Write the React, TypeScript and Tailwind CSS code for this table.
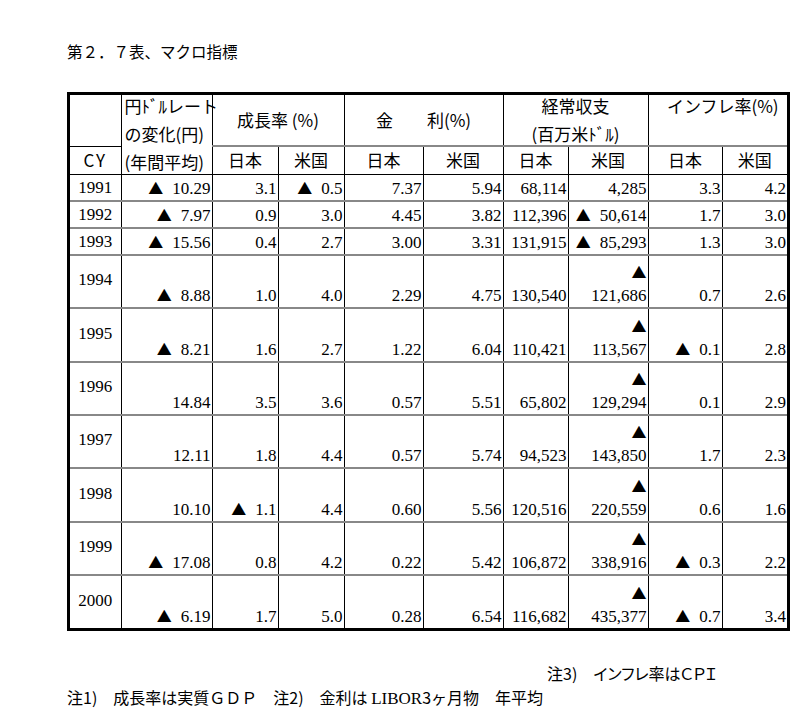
import React from "react";

const cjk = "font-['Noto_Sans_CJK_JP',sans-serif]";
const serif = "font-['Liberation_Serif','Noto_Sans_CJK_JP',serif]";
const tri = "font-['Noto_Sans_CJK_JP',sans-serif] text-[15px]";

// "-" prefix = 減少 (▲)
const rows: string[][] = [
  ["1991", "-10.29", "3.1", "-0.5", "7.37", "5.94", "68,114", "4,285", "3.3", "4.2"],
  ["1992", "-7.97", "0.9", "3.0", "4.45", "3.82", "112,396", "-50,614", "1.7", "3.0"],
  ["1993", "-15.56", "0.4", "2.7", "3.00", "3.31", "131,915", "-85,293", "1.3", "3.0"],
  ["1994", "-8.88", "1.0", "4.0", "2.29", "4.75", "130,540", "-121,686", "0.7", "2.6"],
  ["1995", "-8.21", "1.6", "2.7", "1.22", "6.04", "110,421", "-113,567", "-0.1", "2.8"],
  ["1996", "14.84", "3.5", "3.6", "0.57", "5.51", "65,802", "-129,294", "0.1", "2.9"],
  ["1997", "12.11", "1.8", "4.4", "0.57", "5.74", "94,523", "-143,850", "1.7", "2.3"],
  ["1998", "10.10", "-1.1", "4.4", "0.60", "5.56", "120,516", "-220,559", "0.6", "1.6"],
  ["1999", "-17.08", "0.8", "4.2", "0.22", "5.42", "106,872", "-338,916", "-0.3", "2.2"],
  ["2000", "-6.19", "1.7", "5.0", "0.28", "6.54", "116,682", "-435,377", "-0.7", "3.4"],
];

const heights = ["h-[27px]", "h-[27px]", "h-[27px]", "h-[53px]", "h-[54px]", "h-[53px]", "h-[53px]", "h-[54px]", "h-[53px]", "h-[53px]"];

function Num({ v, stack }: { v: string; stack?: boolean }) {
  const neg = v.startsWith("-");
  const n = neg ? v.slice(1) : v;
  if (neg && stack) {
    return (
      <div className="flex flex-col items-end">
        <span className={`${tri} leading-[25px]`}>▲</span>
        <span className="leading-[23px]">{n}</span>
      </div>
    );
  }
  return (
    <div className="flex items-baseline justify-end leading-[23px]">
      {neg && <span className={`${tri} mr-[9px]`}>▲</span>}
      <span>{n}</span>
    </div>
  );
}

export default function App() {
  return (
    <div className="min-h-screen bg-white pl-[67px] pt-[40px] text-black">
      <p className={`${cjk} text-[15.5px] leading-[22px]`}>第２．７表、マクロ指標</p>

      <div className="mt-[30px] w-[723px] border-[3px] border-black">
        <table className="w-[717px] table-fixed border-collapse">
          <colgroup>
            <col className="w-[51px]" />
            <col className="w-[91px]" />
            <col className="w-[66px]" />
            <col className="w-[66px]" />
            <col className="w-[79px]" />
            <col className="w-[80px]" />
            <col className="w-[65px]" />
            <col className="w-[80px]" />
            <col className="w-[74px]" />
            <col className="w-[65px]" />
          </colgroup>
          <thead className={`${cjk} text-[17px] font-normal`}>
            <tr className="h-[51px]">
              <td className="border-b border-b-black p-0" />
              <td rowSpan={2} className="border-l border-l-black border-b border-b-black p-0 pl-[3px] align-top whitespace-nowrap">
                <div className="-mt-[3px] h-[76px] leading-[28px]">
                  円ﾄﾞﾙレート
                  <br />
                  の変化(円)
                  <br />
                  (年間平均)
                </div>
              </td>
              <td colSpan={2} className="border-l border-l-black border-b-2 border-b-[#888] p-0 text-center align-middle leading-[24px]">
                成長率 (%)
              </td>
              <td colSpan={2} className="border-l border-l-black border-b-2 border-b-[#888] p-0 text-center align-middle whitespace-pre leading-[24px]">
                金　　利(%)
              </td>
              <td colSpan={2} className="border-l border-l-black border-b-2 border-b-[#888] p-0 text-center align-top">
                <div className="-mt-[3px] h-[48px] leading-[28px]">
                  経常収支
                  <br />
                  (百万米ﾄﾞﾙ)
                </div>
              </td>
              <td colSpan={2} className="border-l border-l-black border-b-2 border-b-[#888] p-0 text-center align-top">
                <div className="-mt-[3px] pl-[10px] leading-[28px]">インフレ率(%)</div>
              </td>
            </tr>
            <tr className="h-[28px] leading-[24px]">
              <td className="border-b border-b-black p-0 text-center tracking-[2px]">CY</td>
              {["日本", "米国", "日本", "米国", "日本", "米国", "日本", "米国"].map((h, i) => (
                <td key={i} className="border-l border-l-black border-b border-b-black p-0 text-center">
                  {h}
                </td>
              ))}
            </tr>
          </thead>
          <tbody className={`${serif} text-[17px] leading-[23px]`}>
            {rows.map((r, ri) => (
              <tr key={r[0]} className={heights[ri]}>
                <td className={`p-0 text-center align-middle ${ri > 0 ? "border-t-2 border-t-[#888]" : ""}`}>
                  <div className={ri > 2 ? "-mt-[4px]" : ""}>{r[0]}</div>
                </td>
                {r.slice(1).map((v, ci) => (
                  <td
                    key={ci}
                    className={`border-l border-l-black p-0 pr-[1px] align-bottom ${ri > 0 ? "border-t-2 border-t-[#888]" : ""}`}
                  >
                    <Num v={v} stack={ci === 6 && ri > 2} />
                  </td>
                ))}
              </tr>
            ))}
          </tbody>
        </table>
      </div>

      <div className={`${cjk} mt-[30px] w-[723px] text-[16px] leading-[24px]`}>
        <div className="ml-[480px] w-[174px] overflow-hidden whitespace-nowrap [font-feature-settings:'palt']">
          注3)　インフレ率はＣＰＩ
        </div>
        <div className="whitespace-nowrap">
          注1)　成長率は実質ＧＤＰ　注2)　金利は <span className={`${serif} text-[17px]`}>LIBOR</span>3ヶ月物　年平均
        </div>
      </div>
    </div>
  );
}
